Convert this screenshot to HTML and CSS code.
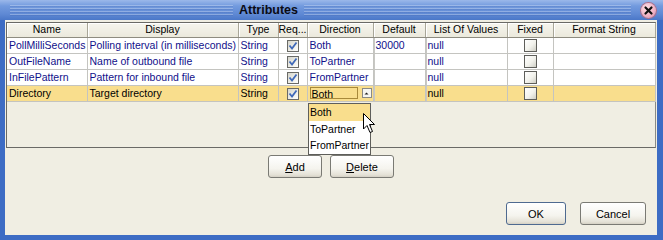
FILE: index.html
```html
<!DOCTYPE html>
<html lang="en">
<head>
	<meta charset="UTF-8">
	<title>Attributes</title>
	<link rel="stylesheet" href="styles.css">
</head>
<body>
	<div class="window">
		<div class="titlebar">
			<span class="stripes stripes-left"></span>
			<span class="title">Attributes</span>
			<span class="stripes stripes-right"></span>
			<span class="close">
				<svg width="15" height="15" viewBox="0 0 15 15">
					<path d="M4.5 4.5 L10.5 10.5 M10.5 4.5 L4.5 10.5" stroke="#111" stroke-width="2.2" stroke-linecap="round"/>
				</svg>
			</span>
		</div>
		<div class="content">
			<div class="grid">
				<table class="attr-table">
					<colgroup>
						<col class="c-name"><col class="c-display"><col class="c-type"><col class="c-req"><col class="c-dir"><col class="c-default"><col class="c-list"><col class="c-fixed"><col class="c-format">
					</colgroup>
					<thead>
						<tr>
							<th>Name</th><th>Display</th><th>Type</th><th>Req...</th><th>Direction</th><th>Default</th><th>List Of Values</th><th>Fixed</th><th>Format String</th>
						</tr>
					</thead>
					<tbody>
						<tr>
							<td>PollMilliSeconds</td>
							<td>Polling interval (in milliseconds)</td>
							<td>String</td>
							<td class="chk"><span class="box checked"><svg width="12" height="12" viewBox="0 0 12 12"><path d="M2.5 5.5 L5 8.5 L9.5 2.5" fill="none" stroke="#4069b8" stroke-width="1.8"/></svg></span></td>
							<td>Both</td>
							<td class="field">30000</td>
							<td class="field">null</td>
							<td class="chk"><span class="box"></span></td>
							<td></td>
						</tr>
						<tr>
							<td>OutFileName</td>
							<td>Name of outbound file</td>
							<td>String</td>
							<td class="chk"><span class="box checked"><svg width="12" height="12" viewBox="0 0 12 12"><path d="M2.5 5.5 L5 8.5 L9.5 2.5" fill="none" stroke="#4069b8" stroke-width="1.8"/></svg></span></td>
							<td>ToPartner</td>
							<td class="field"></td>
							<td class="field">null</td>
							<td class="chk"><span class="box"></span></td>
							<td></td>
						</tr>
						<tr>
							<td>InFilePattern</td>
							<td>Pattern for inbound file</td>
							<td>String</td>
							<td class="chk"><span class="box checked"><svg width="12" height="12" viewBox="0 0 12 12"><path d="M2.5 5.5 L5 8.5 L9.5 2.5" fill="none" stroke="#4069b8" stroke-width="1.8"/></svg></span></td>
							<td>FromPartner</td>
							<td class="field"></td>
							<td class="field">null</td>
							<td class="chk"><span class="box"></span></td>
							<td></td>
						</tr>
						<tr class="selected">
							<td>Directory</td>
							<td>Target directory</td>
							<td>String</td>
							<td class="chk"><span class="box checked"><svg width="12" height="12" viewBox="0 0 12 12"><path d="M2.5 5.5 L5 8.5 L9.5 2.5" fill="none" stroke="#4069b8" stroke-width="1.8"/></svg></span></td>
							<td>
								<div class="combo">
									<span class="combo-text">Both</span>
									<span class="combo-btn"><svg width="7" height="7" viewBox="0 0 7 7"><path d="M1.5 4.5 L3.5 2.5 L5.5 4.5 Z" fill="#222"/></svg></span>
								</div>
							</td>
							<td class="field"></td>
							<td class="field">null</td>
							<td class="chk"><span class="box"></span></td>
							<td></td>
						</tr>
					</tbody>
				</table>
				<ul class="popup">
					<li class="selected">Both</li>
					<li>ToPartner</li>
					<li>FromPartner</li>
				</ul>
				<svg class="cursor" width="13" height="21" viewBox="0 0 13 21">
					<path d="M0.5 0.5 L0.5 16 L4 12.5 L7 19.5 L9.5 18.5 L6.5 11.5 L11.5 11.5 Z" fill="#fff" stroke="#000" stroke-width="1"/>
				</svg>
			</div>
			<div class="row-buttons">
				<button class="btn btn-add"><u>A</u>dd</button>
				<button class="btn btn-delete"><u>D</u>elete</button>
			</div>
			<div class="dialog-buttons">
				<button class="btn btn-ok">OK</button>
				<button class="btn btn-cancel">Cancel</button>
			</div>
		</div>
	</div>
</body>
</html>
```

FILE: styles.css
```css
*{
	margin: 0;
	padding: 0;
	box-sizing: border-box;
}
ul{
	list-style: none;
}
body{
	width: 663px;
	height: 240px;
	overflow: hidden;
	font-family: "Liberation Sans", Arial, sans-serif;
	font-size: 10.5px;
	color: #000;
}
.window{
	width: 663px;
	height: 240px;
	background: #3d6cc4;
	display: flex;
	flex-direction: column;
}
.titlebar{
	height: 20px;
	display: flex;
	align-items: center;
	padding-left: 10px;
	background: linear-gradient(to bottom, #9bb8ea 0%, #729ade 30%, #5f89d4 70%, #4a77c8 100%);
}
.stripes{
	height: 11px;
	background: repeating-linear-gradient(to bottom, rgba(255,255,255,0.28) 0 1px, rgba(40,70,150,0.15) 1px 2px, transparent 2px 3px);
}
.stripes-left{
	width: 223px;
}
.stripes-right{
	flex: 1;
}
.title{
	font-family: "Liberation Sans Narrow", "Liberation Sans", Arial, sans-serif;
	font-weight: bold;
	font-size: 12.5px;
	color: #0b0b14;
	padding: 0 6px;
	line-height: 20px;
}
.close{
	width: 15px;
	height: 15px;
	border-radius: 50%;
	margin: 0 7px 0 10px;
	background: radial-gradient(circle at 40% 35%, #fde3ea 0%, #f2b3c4 55%, #d98aa2 100%);
	box-shadow: 0 0 0 1px #b27088;
}
.close svg{
	display: block;
}
.content{
	flex: 1;
	margin: 0 6px 5px 5px;
	background: #f0eee3;
	display: flex;
	flex-direction: column;
	padding: 2px 1px 0 1px;
}
.grid{
	position: relative;
	height: 126px;
	border: 1px solid #6a6a66;
	border-right-color: #8a8a86;
	background: #f0eee3;
}
.attr-table{
	table-layout: fixed;
	border-collapse: collapse;
	width: 648px;
}
.c-name{ width: 80px; }
.c-display{ width: 151px; }
.c-type{ width: 40px; }
.c-req{ width: 29px; }
.c-dir{ width: 66px; }
.c-default{ width: 52px; }
.c-list{ width: 82px; }
.c-fixed{ width: 46px; }
.c-format{ width: 102px; }
.attr-table th{
	height: 14px;
	font-weight: normal;
	text-align: center;
	white-space: nowrap;
	overflow: hidden;
	background: linear-gradient(to bottom, #f6f5ee, #ebe9dc);
	border-right: 1px solid #a8a698;
	border-bottom: 1px solid #8e8c80;
	box-shadow: inset 1px 1px 0 #fff;
	line-height: 13px;
}
.attr-table td{
	height: 16px;
	padding: 0 2px;
	white-space: nowrap;
	overflow: hidden;
	color: #10108a;
	background: #fff;
	border-right: 1px solid #c4c4c0;
	border-bottom: 1px solid #c4c4c0;
	line-height: 15px;
}
.attr-table td.field{
	box-shadow: inset 1px 0 0 #c8c8c4;
}
.attr-table .selected td{
	background: #f9de8d;
	color: #000;
}
.chk{
	text-align: center;
}
.box{
	display: inline-block;
	vertical-align: middle;
	width: 13px;
	height: 13px;
	border: 1px solid #5e5e5a;
	background: linear-gradient(135deg, #ffffff 0%, #f2f2ec 55%, #cfcfc6 100%);
}
.box.checked{
	width: 12px;
	height: 12px;
	border-color: #6a6a66;
	background: linear-gradient(135deg, #d4d4cc 0%, #f0f0ea 60%, #fff 100%);
}
.box svg{
	display: block;
	margin: -1px;
}
.combo{
	display: flex;
	align-items: center;
	height: 12px;
	width: 63px;
}
.combo-text{
	width: 48px;
	height: 12px;
	border: 1px solid #a8893a;
	line-height: 13px;
	padding-left: 1px;
	overflow: hidden;
}
.combo-btn{
	width: 10px;
	height: 10px;
	margin-left: 4px;
	border: 1px solid #8a8a86;
	background: #f6f6f2;
}
.combo-btn svg{
	display: block;
	margin: 0.5px;
}
.popup{
	position: absolute;
	left: 301px;
	top: 80px;
	width: 63px;
	border: 1px solid #5e5e5a;
	background: #fff;
	padding: 0;
}
.popup li{
	height: 16.5px;
	line-height: 17px;
	padding-left: 1px;
}
.popup li.selected{
	background: #f9de8d;
}
.cursor{
	position: absolute;
	left: 356px;
	top: 90px;
}
.row-buttons{
	display: flex;
	justify-content: center;
	gap: 8px;
	margin-top: 7px;
}
.btn{
	height: 23px;
	font-family: "Liberation Sans", Arial, sans-serif;
	font-size: 11px;
	color: #000;
	border: 1px solid #7a7a74;
	border-radius: 3px;
	background: linear-gradient(to bottom, #ffffff 0%, #f5f4ee 60%, #e4e1d6 90%, #d4d0c4 100%);
}
.btn-add{ width: 54px; }
.btn-delete{ width: 64px; }
.dialog-buttons{
	display: flex;
	justify-content: flex-end;
	gap: 14px;
	margin-top: 24px;
	padding-right: 10px;
}
.btn-ok{
	width: 60px;
	border-color: #4e6a90;
}
.btn-cancel{ width: 66px; }
```
